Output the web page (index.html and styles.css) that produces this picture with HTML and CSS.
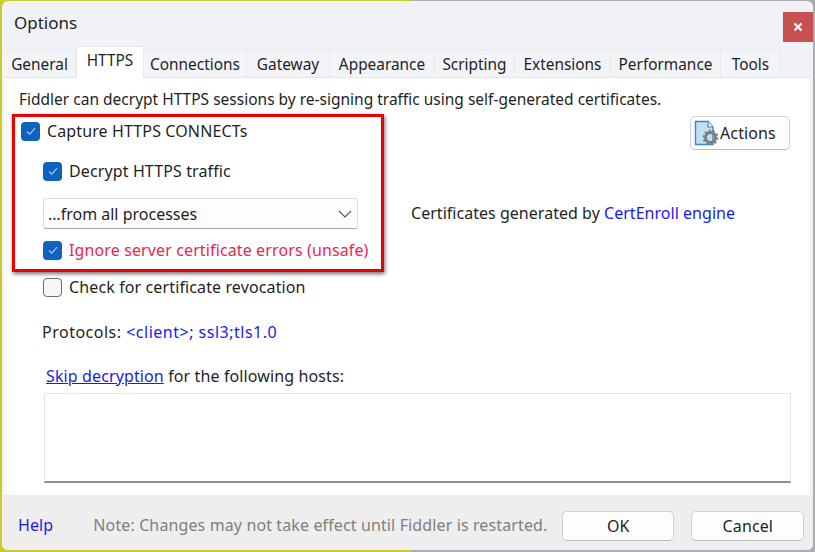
FILE: index.html
```html
<!DOCTYPE html>
<html lang="en">
<head>
<meta charset="utf-8">
<title>Options</title>
<link rel="stylesheet" href="styles.css">
</head>
<body>
<div class="window">
  <header class="titlebar">
    <span class="title">Options</span>
    <span class="close"><svg width="10" height="10" viewBox="0 0 10 10"><path d="M1.5 1.5l7 7M8.5 1.5l-7 7" stroke="#fff" stroke-width="2.2" fill="none"/></svg></span>
  </header>
  <nav class="tabs">
    <span class="tab t-general">General</span>
    <span class="tab active">HTTPS</span>
    <span class="tab t-conn">Connections</span>
    <span class="tab t-gate">Gateway</span>
    <span class="tab t-app">Appearance</span>
    <span class="tab t-script">Scripting</span>
    <span class="tab t-ext">Extensions</span>
    <span class="tab t-perf">Performance</span>
    <span class="tab t-tools">Tools</span>
  </nav>
  <main class="panel">
    <p class="intro">Fiddler can decrypt HTTPS sessions by re-signing traffic using self-generated certificates.</p>
    <div class="capture-row">
      <label class="check">
        <span class="box on"><svg width="12" height="12" viewBox="0 0 12 12"><path d="M2 6.5l2.8 2.6L10 3.2" stroke="#a9c8ec" stroke-width="1.2" fill="none"/></svg></span>
        <span>Capture HTTPS CONNECTs</span>
      </label>
      <button class="btn actions">
        <svg width="26" height="26" viewBox="0 0 26 26">
          <path d="M1.5 1.5H14L19 7V24.5H1.5Z" fill="#c3e0f2" stroke="#3f87bd" stroke-width="1.4"/>
          <path d="M14 1.5V7H19" fill="#eef6fb" stroke="#3f87bd" stroke-width="1.2"/>
          <circle cx="16.5" cy="17.5" r="5" fill="none" stroke="#7a7e83" stroke-width="3"/>
          <circle cx="16.5" cy="17.5" r="7" fill="none" stroke="#7a7e83" stroke-width="1.8" stroke-dasharray="2.2 2.2"/>
        </svg>
        <span>Actions</span>
      </button>
    </div>
    <label class="check decrypt">
      <span class="box on"><svg width="12" height="12" viewBox="0 0 12 12"><path d="M2 6.5l2.8 2.6L10 3.2" stroke="#a9c8ec" stroke-width="1.2" fill="none"/></svg></span>
      <span>Decrypt HTTPS traffic</span>
    </label>
    <div class="select-row">
      <div class="select">
        <span class="select-value">…from all processes</span>
        <svg width="14" height="8" viewBox="0 0 14 8"><path d="M1 1l6 6 6-6" stroke="#555" stroke-width="1.1" fill="none"/></svg>
      </div>
      <span class="certs">Certificates generated by <a class="link plain">CertEnroll engine</a></span>
    </div>
    <label class="check ignore">
      <span class="box on"><svg width="12" height="12" viewBox="0 0 12 12"><path d="M2 6.5l2.8 2.6L10 3.2" stroke="#a9c8ec" stroke-width="1.2" fill="none"/></svg></span>
      <span class="danger">Ignore server certificate errors (unsafe)</span>
    </label>
    <label class="check revoke">
      <span class="box"></span>
      <span>Check for certificate revocation</span>
    </label>
    <p class="protocols">Protocols: <a class="link plain">&lt;client&gt;; ssl3;tls1.0</a></p>
    <p class="skip"><a class="link">Skip decryption</a> for the following hosts:</p>
    <div class="hosts"></div>
    <div class="highlight"></div>
  </main>
  <footer class="footer">
    <a class="link plain help">Help</a>
    <span class="note">Note: Changes may not take effect until Fiddler is restarted.</span>
    <button class="btn ok">OK</button>
    <button class="btn cancel">Cancel</button>
  </footer>
</div>
</body>
</html>
```
FILE: styles.css
```css
* { box-sizing: border-box; }
html, body { margin: 0; height: 100%; }
body {
  width: 815px;
  height: 552px;
  overflow: hidden;
  background: linear-gradient(90deg, #c9cc2a 0, #c9cc2a 412px, #a9adb3 412px, #a9adb3 100%);
  font-family: "Noto Sans", sans-serif;
  font-size: 16px;
  letter-spacing: .12px;
  color: #1f1f1f;
  padding: 1px 1px 2px 2px;
}
.window {
  width: 811px;
  height: 549px;
  background: #f0f2f7;
  border-radius: 6px;
  overflow: hidden;
  display: flex;
  flex-direction: column;
}
.titlebar {
  height: 45px;
  flex: none;
  display: flex;
  justify-content: space-between;
  padding: 11px 0 0 12px;
}
.title { font-size: 17px; letter-spacing: 0; line-height: 22px; }
.close {
  width: 30px;
  height: 30px;
  background: #c75050;
  display: flex;
  align-items: center;
  justify-content: center;
}
.tabs {
  height: 31px;
  flex: none;
  display: flex;
  align-items: flex-end;
  padding-left: 2px;
  font-size: 15.4px;
  letter-spacing: 0;
}
.tab {
  height: 28px;
  display: flex;
  align-items: center;
  justify-content: center;
  background: #f3f4f7;
  border: 1px solid #e9e9ec;
  border-bottom: none;
  border-left: none;
  line-height: 1;
  padding-top: 2px;
}
.tab.active {
  width: 68px;
  height: 32px;
  background: #fff;
  border: 1px solid #e9e9ec;
  border-bottom: none;
  padding: 0 0 4px;
  position: relative;
  z-index: 1;
  margin-bottom: -1px;
}
.t-general { width: 72px; }
.t-conn { width: 103px; }
.t-gate { width: 83px; }
.t-app { width: 105px; }
.t-script { width: 80px; }
.t-ext { width: 96px; }
.t-perf { width: 110px; }
.t-tools { width: 60px; }
.panel {
  position: relative;
  width: 806px;
  height: 418px;
  flex: none;
  margin-left: 2px;
  background: #fff;
  border-top: 1px solid #e6e6e9;
  padding: 9px 20px 0 15px;
}
.intro { margin: 0; font-size: 15.5px; letter-spacing: 0; line-height: 24px; white-space: nowrap; }
.capture-row {
  display: flex;
  justify-content: space-between;
  align-items: flex-start;
  height: 46px;
  padding-top: 6px;
}
.check {
  display: flex;
  align-items: center;
  gap: 7px;
  height: 20px;
  line-height: 20px;
  white-space: nowrap;
}
.capture-row .check { margin: 4px 0 0 2px; }
.box {
  width: 19px;
  height: 19px;
  flex: none;
  border: 1.5px solid #6c6c6c;
  border-radius: 4px;
  background: #f6f6f6;
  display: flex;
  align-items: center;
  justify-content: center;
}
.box.on { background: #0f62c0; border: none; }
.btn {
  font: inherit;
  letter-spacing: inherit;
  color: inherit;
  background: #fdfdfd;
  border: 1px solid #cfd1d4;
  border-bottom-color: #b9bbbe;
  border-radius: 5px;
  padding: 0;
}
.actions {
  width: 100px;
  height: 34px;
  display: flex;
  align-items: center;
  gap: 0;
  padding-left: 3px;
  margin-top: -1px;
}
.decrypt { margin: 4px 0 0 24px; }
.select-row {
  display: flex;
  align-items: center;
  margin: 17px 0 0 24px;
  gap: 53px;
}
.select {
  width: 315px;
  height: 31px;
  display: flex;
  align-items: center;
  justify-content: space-between;
  padding: 0 5px 0 4px;
  border: 1px solid #dcdcdc;
  border-bottom-color: #a8a8a8;
  border-radius: 3px;
  background: #fdfdfd;
}
.select-value { letter-spacing: 0; }
.certs { white-space: nowrap; letter-spacing: .03px; margin-top: -2px; }
.ignore { margin: 11px 0 0 24px; }
.danger { color: #e8274f; }
.revoke { margin: 17px 0 0 24px; }
.protocols { margin: 24px 0 0 23px; line-height: 22px; letter-spacing: .5px; white-space: nowrap; }
.skip { margin: 22px 0 0 27px; line-height: 22px; white-space: nowrap; }
.hosts {
  width: 747px;
  height: 90px;
  margin: 6px 0 0 25px;
  background: #fff;
  border: 1px solid #e6e6e6;
  border-bottom: 2px solid #8d8d8d;
}
.link { color: #1a1aee; text-decoration: underline; }
.link.plain { text-decoration: none; }
.highlight {
  position: absolute;
  left: 8px;
  top: 36px;
  width: 372px;
  height: 158px;
  border: 3px solid #ee0000;
  box-shadow: 1px 2px 4px rgba(0, 0, 0, .55);
}
.footer {
  flex: 1;
  background: #eeeeee;
  display: flex;
  align-items: flex-start;
  padding: 16px 0 0 16px;
}
.help { line-height: 30px; margin-top: -1px; }
.note { margin-left: 40px; width: 469px; color: #808080; line-height: 30px; margin-top: -1px; white-space: nowrap; }
.ok { width: 112px; height: 30px; }
.cancel { width: 113px; height: 30px; margin-left: 17px; }
```
